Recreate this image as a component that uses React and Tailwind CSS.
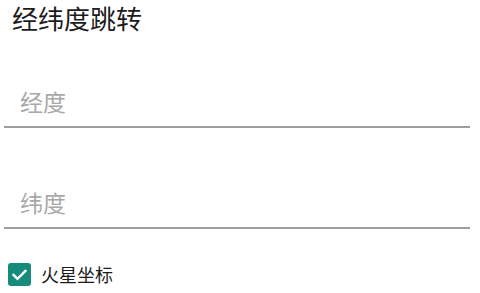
const font = { fontFamily: '"Noto Sans CJK SC", "Noto Sans", sans-serif' };

function Field({ label, h }) {
  return (
    <div className={`ml-[4px] mr-[10px] flex flex-col justify-end ${h}`}>
      <input
        placeholder={label}
        className="w-full h-[52px] px-[16px] text-[23px] text-[#333] placeholder:text-[#a8a8a8] bg-transparent outline-none border-b-2 border-[#9e9e9e]"
      />
    </div>
  );
}

export default function App() {
  return (
    <div className="w-[480px] h-[293px] bg-white overflow-hidden" style={font}>
      <h1 className="pl-[12px] text-[26px] leading-[36px] text-[#1c1c1c] font-normal">经纬度跳转</h1>
      <Field label="经度" h="h-[92px]" />
      <Field label="纬度" h="h-[101px]" />
      <label className="flex items-center gap-[10px] pl-[8px] mt-[34px]">
        <span className="w-[23px] h-[23px] rounded-[3px] bg-[#168a7b] flex items-center justify-center">
          <svg viewBox="0 0 24 24" className="w-[19px] h-[19px]" fill="none" stroke="white" strokeWidth="3" strokeLinecap="square">
            <path d="M4.5 12.5l5 5 10-10" />
          </svg>
        </span>
        <span className="text-[18px] leading-[23px] text-[#1c1c1c]">火星坐标</span>
      </label>
    </div>
  );
}
